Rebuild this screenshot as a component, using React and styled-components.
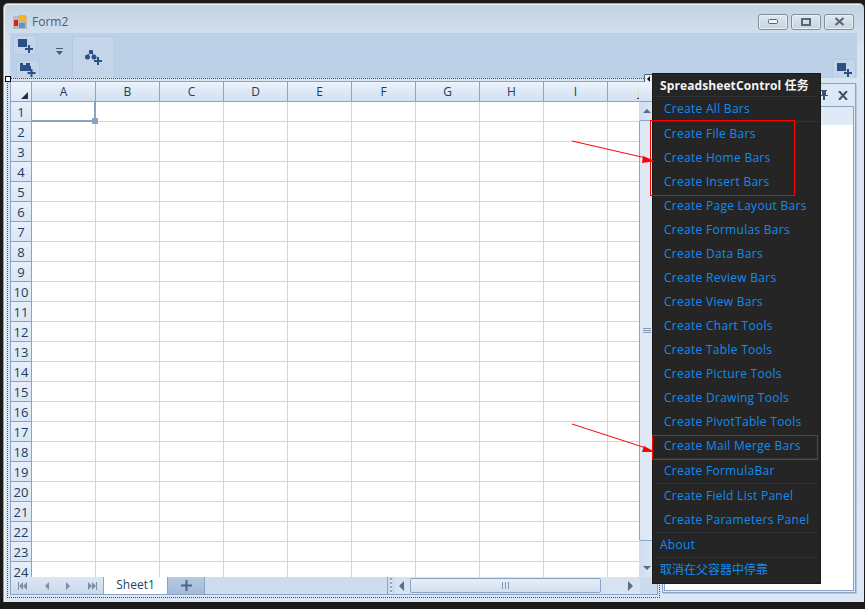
import React from "react";
import styled, { createGlobalStyle } from "styled-components";

const GlobalStyle = createGlobalStyle`
  html, body {
    margin: 0;
    padding: 0;
    background: #1b1b1b;
  }
  * {
    box-sizing: border-box;
  }
`;

const Page = styled.div`
  background: #1b1b1b;
  height: 609px;
  overflow: hidden;
  padding: 3px 1px 7px 3px;
  position: relative;
  width: 865px;
`;

const Window = styled.div`
  background: linear-gradient(180deg, #c3d2e2 0%, #d9e5f2 8%, #dbe7f4 100%);
  border-left: 1px solid #8f99a3;
  border-top: 1px solid #a0a8b0;
  border-radius: 5px 5px 0 0;
  box-shadow: inset 1px 1px 0 #f0f4f8;
  display: flex;
  flex-direction: column;
  height: 100%;
  padding: 0 4px 0 3px;
`;

const TitleBar = styled.div`
  align-items: center;
  display: flex;
  flex: none;
  height: 29px;
  padding: 6px 6px 0 6px;
`;

const TitleText = styled.span`
  color: #4d5d6e;
  font-family: "Open Sans", "Liberation Sans", sans-serif;
  font-size: 12px;
  margin-left: 3px;
`;

const TitleButtons = styled.div`
  display: flex;
  gap: 3px;
  margin-left: auto;
`;

const CaptionButton = styled.div`
  align-items: center;
  background: linear-gradient(180deg, #dfe8f1, #c5d3e2);
  border: 1px solid #7f8d9e;
  border-radius: 3px;
  box-shadow: inset 0 0 0 1px #eaf0f6;
  display: flex;
  height: 16px;
  justify-content: center;
  width: 30px;
`;

const Toolbar = styled.div`
  background: #bcd0e8;
  display: flex;
  flex: none;
  height: 45px;
  margin: 0 3px;
  overflow: hidden;
  padding: 2px 1px 0 3px;
`;

const ToolStack = styled.div`
  display: flex;
  flex-direction: column;
  gap: 5px;
  width: 43px;
`;

const ToolButton = styled.div`
  align-items: center;
  background: #c4d5ea;
  border: 1px solid #b5c9e2;
  border-radius: 3px;
  display: flex;
  flex: none;
  height: ${(p) => p.$h || 20}px;
  justify-content: center;
  margin-left: ${(p) => p.$ml || 0}px;
  width: ${(p) => p.$w || 24}px;
`;

const DropMark = styled.div`
  flex: none;
  margin: 6px 9px 0 0;
  width: 7px;
`;

const BigTool = styled(ToolButton)`
  margin-top: 1px;
`;

const RightTool = styled(ToolButton)`
  align-self: flex-end;
  margin-bottom: -1px;
  margin-left: auto;
`;

const Body = styled.div`
  display: flex;
  flex: 1;
  gap: 1px;
  min-height: 0;
`;

const Selection = styled.div`
  border: 1px dotted #4c4c4c;
  flex: none;
  height: 520px;
  padding: 2px 1px 2px 2px;
  position: relative;
  width: 653px;
`;

const Handle = styled.div`
  background: #fff;
  border: 1px solid #000;
  height: 6px;
  left: -3px;
  position: absolute;
  top: -3px;
  width: 6px;
`;

const SmartTag = styled.div`
  align-items: center;
  background: #e8eef5;
  border: 1px solid #55606c;
  border-radius: 1px;
  display: flex;
  height: 9px;
  justify-content: center;
  position: absolute;
  right: 6px;
  top: -5px;
  width: 9px;
`;

const Sheet = styled.div`
  background: #fff;
  border: 1px solid #8ba3c4;
  display: flex;
  flex-direction: column;
  height: 100%;
`;

const SheetMain = styled.div`
  display: flex;
  flex: 1;
  min-height: 0;
`;

const Grid = styled.div`
  display: grid;
  flex: none;
  grid-auto-rows: 20px;
  grid-template-columns: 21px repeat(10, 64px);
  overflow: hidden;
  width: 628px;
`;

const HeadCell = styled.div`
  align-items: center;
  background: linear-gradient(180deg, #ecf3fb 0%, #dbe7f5 55%, #d3e1f1 100%);
  border-bottom: 1px solid #8ba3c4;
  border-right: 1px solid #8ba3c4;
  color: #243a5c;
  display: flex;
  font-family: "Open Sans", "Liberation Sans", sans-serif;
  font-size: 12px;
  justify-content: center;
  overflow: hidden;
  position: relative;
`;

const RowHead = styled(HeadCell)`
  background: linear-gradient(180deg, #e6eff9, #dae6f4);
  font-size: 13px;
`;

const Corner = styled(HeadCell)`
  background: linear-gradient(180deg, #ecf3fb, #dde8f5);
`;

const CornerMark = styled.div`
  border-bottom: 7px solid #1f2f45;
  border-left: 7px solid transparent;
  bottom: 2px;
  height: 0;
  position: absolute;
  right: 3px;
  width: 0;
`;

const Cell = styled.div`
  background: #fff;
  border-bottom: 1px solid #c9d7ea;
  border-right: 1px solid #c9d7ea;
  position: relative;
`;

const ActiveCell = styled(Cell)`
  border-bottom: 2px solid #8aa3c4;
  border-right: 2px solid #8aa3c4;
  z-index: 1;
`;

const FillHandle = styled.div`
  background: #8aa3c4;
  bottom: -4px;
  height: 6px;
  position: absolute;
  right: -4px;
  width: 6px;
`;

const VScroll = styled.div`
  background: linear-gradient(90deg, #d0deee, #dde7f3);
  display: flex;
  flex: 1;
  flex-direction: column;
  position: relative;
`;

const ScrollCap = styled.div`
  background: linear-gradient(180deg, #ecf3fb, #d3e1f1);
  border-bottom: 1px solid #8ba3c4;
  flex: none;
  height: 20px;
`;

const VArrow = styled.div`
  align-items: flex-end;
  display: flex;
  flex: none;
  height: ${(p) => p.$h}px;
  padding: 0 0 7px 4px;
`;

const VThumb = styled.div`
  align-items: center;
  background: #dfe9f5;
  border: 1px solid #8ba3c4;
  border-radius: 2px;
  display: flex;
  flex: 1;
  padding-left: 3px;
`;

const GripLines = styled.div`
  border-bottom: 1px solid #8496b0;
  border-top: 1px solid #8496b0;
  height: 5px;
  position: relative;
  width: 8px;

  &::after {
    background: #8496b0;
    content: "";
    height: 1px;
    left: 0;
    position: absolute;
    right: 0;
    top: 1px;
  }
`;

const BottomBar = styled.div`
  background: #ccdbed;
  display: flex;
  flex: none;
  height: 17px;
`;

const SheetNav = styled.div`
  align-items: center;
  background: linear-gradient(180deg, #dce7f4, #c9d9ec);
  border-right: 1px solid #8ba3c4;
  display: flex;
  flex: none;
  justify-content: space-between;
  padding: 0 6px 0 7px;
  width: 93px;
`;

const SheetTab = styled.div`
  background: #fff;
  color: #2b3f5c;
  flex: none;
  font-family: "Open Sans", "Liberation Sans", sans-serif;
  font-size: 12px;
  line-height: 16px;
  text-align: center;
  width: 63px;
`;

const AddTab = styled.div`
  align-items: center;
  background: linear-gradient(180deg, #b5c9e2, #a3bbd9);
  border-left: 1px solid #8ba3c4;
  border-right: 1px solid #8ba3c4;
  display: flex;
  flex: none;
  justify-content: center;
  width: 38px;
`;

const TabFill = styled.div`
  background: #cfdcee;
  border-right: 1px solid #8ba3c4;
  flex: none;
  width: 183px;
`;

const Splitter = styled.div`
  background: repeating-linear-gradient(180deg, #8ba3c4 0 2px, #dfe8f3 2px 4px);
  flex: none;
  margin: 1px 3px 0 2px;
  width: 2px;
`;

const HScroll = styled.div`
  align-items: center;
  background: #d8e3f1;
  display: flex;
  flex: 1;
  padding: 0 2px 0 4px;
`;

const HThumb = styled.div`
  align-items: center;
  background: linear-gradient(180deg, #e5edf7, #d4e0f0);
  border: 1px solid #8ba3c4;
  border-radius: 2px;
  display: flex;
  height: 15px;
  justify-content: center;
  margin: 0 27px 0 6px;
  width: 191px;
`;

const HGrip = styled.div`
  border-left: 1px solid #8496b0;
  border-right: 1px solid #8496b0;
  height: 7px;
  position: relative;
  width: 7px;

  &::after {
    background: #8496b0;
    content: "";
    height: 7px;
    left: 2px;
    position: absolute;
    top: 0;
    width: 1px;
  }
`;

const ScrollCorner = styled.div`
  background: #ccdbed;
  flex: none;
  width: 17px;
`;

const DockPanel = styled.div`
  background: #dde8f5;
  border: 1px solid #8ba3c4;
  box-shadow: 1px 1px 0 #b5c7de;
  display: flex;
  flex: none;
  flex-direction: column;
  height: 510px;
  margin: 5px 0 0 1px;
  padding: 0 1px 1px;
  width: 194px;
`;

const DockHead = styled.div`
  align-items: center;
  display: flex;
  flex: none;
  gap: 9px;
  height: 22px;
  justify-content: flex-end;
  padding-right: 6px;
`;

const DockContent = styled.div`
  background: #fff;
  border: 1px solid #8ba3c4;
  display: flex;
  flex: 1;
  flex-direction: column;
`;

const DockStrip = styled.div`
  background: #e0eaf7;
  flex: none;
  height: 18px;
`;

const TaskMenu = styled.div`
  background: #252525;
  border: 1px solid #1a1a1a;
  color: #0d8df2;
  display: flex;
  flex-direction: column;
  font-family: "Open Sans", "Noto Sans CJK SC", sans-serif;
  font-size: 12px;
  height: 511px;
  left: 652px;
  letter-spacing: 0.28px;
  padding: 0 3px;
  position: absolute;
  top: 73px;
  width: 169px;
`;

const MenuTitle = styled.div`
  align-items: center;
  color: #f4f4f4;
  display: flex;
  flex: none;
  font-size: 12px;
  font-weight: 700;
  height: 22px;
  letter-spacing: 0.1px;
  padding-left: 4px;
  white-space: nowrap;
`;

const MenuGroup = styled.div`
  border-top: 1px solid #333;
  display: flex;
  flex: none;
  flex-direction: column;
`;

const MenuItem = styled.div`
  align-items: center;
  display: flex;
  flex: none;
  height: ${(p) => p.$h || 24}px;
  letter-spacing: ${(p) => (p.$plain ? 0 : "inherit")};
  padding-bottom: 2px;
  padding-left: ${(p) => (p.$flush ? 4 : 8)}px;
  white-space: nowrap;
`;

const RedBox = styled.div`
  border: 1px solid #ff0000;
  height: ${(p) => p.$h}px;
  left: ${(p) => p.$x}px;
  pointer-events: none;
  position: absolute;
  top: ${(p) => p.$y}px;
  width: ${(p) => p.$w}px;
`;

const ArrowLayer = styled.svg`
  height: 609px;
  left: 0;
  pointer-events: none;
  position: absolute;
  top: 0;
  width: 865px;
`;

const BLUE = "#2c4f86";

function SquarePlus() {
  return (
    <svg width="20" height="18" viewBox="0 0 20 18">
      <rect x="3" y="3" width="9" height="8" fill={BLUE} />
      <path d="M14 9v8M10 13h8" stroke={BLUE} strokeWidth="2" />
    </svg>
  );
}

function FolderPlus() {
  return (
    <svg width="22" height="18" viewBox="0 0 22 18">
      <path d="M3 2h3v2h3V2h4v3h1v5H3z" fill={BLUE} />
      <path d="M14.5 8v8M10.5 12h8" stroke={BLUE} strokeWidth="2" />
    </svg>
  );
}

function ShapesPlus() {
  return (
    <svg width="20" height="20" viewBox="0 0 20 20">
      <rect x="5" y="1" width="4" height="4" rx="1" fill={BLUE} />
      <circle cx="3.5" cy="8" r="2.5" fill={BLUE} />
      <circle cx="10" cy="8" r="2.5" fill={BLUE} />
      <path d="M4 6l2-2M9 6L8 4" stroke={BLUE} strokeWidth="1" />
      <path d="M14 8v8M10 12h8" stroke={BLUE} strokeWidth="2" />
    </svg>
  );
}

function Tri({ dir = "left", color = "#5a6b85", size = 4 }) {
  const paths = {
    left: "M4 0v8L0 4z",
    right: "M0 0v8l4-4z",
    up: "M0 4h8L4 0z",
    down: "M0 0h8L4 4z",
  };
  const wide = dir === "up" || dir === "down";
  return (
    <svg width={wide ? size * 2 : size} height={wide ? size : size * 2} viewBox={wide ? "0 0 8 4" : "0 0 4 8"}>
      <path d={paths[dir]} fill={color} />
    </svg>
  );
}

function EndArrow({ flip }) {
  return (
    <svg width="9" height="8" viewBox="0 0 9 8" style={flip ? { transform: "scaleX(-1)" } : undefined}>
      <path d="M0 0h1v8H0zM5 0v8L1 4zM9 0v8L5 4z" fill="#7f8ea3" />
    </svg>
  );
}

const columns = ["A", "B", "C", "D", "E", "F", "G", "H", "I", "J"];
const rows = Array.from({ length: 24 }, (_, i) => i + 1);

const firstGroup = [
  "Create File Bars",
  "Create Home Bars",
  "Create Insert Bars",
  "Create Page Layout Bars",
  "Create Formulas Bars",
  "Create Data Bars",
  "Create Review Bars",
  "Create View Bars",
  "Create Chart Tools",
  "Create Table Tools",
  "Create Picture Tools",
  "Create Drawing Tools",
  "Create PivotTable Tools",
  "Create Mail Merge Bars",
];

function App() {
  return (
    <>
      <GlobalStyle />
      <Page>
        <Window>
          <TitleBar>
            <svg width="16" height="14" viewBox="0 0 16 14">
              <rect x="0" y="1" width="14" height="13" fill="#b9b9b9" />
              <rect x="1" y="5" width="4" height="6" fill="#c9261d" />
              <rect x="6" y="0" width="7" height="7" fill="#f0b429" />
              <rect x="6" y="8" width="6" height="5" fill="#5b8fd8" />
            </svg>
            <TitleText>Form2</TitleText>
            <TitleButtons>
              <CaptionButton>
                <svg width="10" height="5" viewBox="0 0 10 5">
                  <rect x="0.5" y="0.5" width="9" height="4" rx="1" fill="#f4f6f8" stroke="#56677c" />
                </svg>
              </CaptionButton>
              <CaptionButton>
                <svg width="10" height="8" viewBox="0 0 10 8">
                  <rect x="1" y="1" width="8" height="6" fill="none" stroke="#56677c" strokeWidth="2" />
                </svg>
              </CaptionButton>
              <CaptionButton>
                <svg width="11" height="9" viewBox="0 0 11 9">
                  <path d="M1.5 1l8 7M9.5 1l-8 7" stroke="#56677c" strokeWidth="2.2" />
                </svg>
              </CaptionButton>
            </TitleButtons>
          </TitleBar>
          <Toolbar>
            <ToolStack>
              <ToolButton>
                <SquarePlus />
              </ToolButton>
              <ToolButton $ml={3}>
                <FolderPlus />
              </ToolButton>
            </ToolStack>
            <DropMark>
              <svg width="7" height="7" viewBox="0 0 7 7">
                <path d="M0 0h7v1H0zM0 3h7L3.5 7z" fill="#4b5a70" />
              </svg>
            </DropMark>
            <BigTool $w={43} $h={45}>
              <ShapesPlus />
            </BigTool>
            <RightTool>
              <SquarePlus />
            </RightTool>
          </Toolbar>
          <Body>
            <Selection>
              <Handle />
              <SmartTag>
                <Tri dir="left" color="#111" size={3} />
              </SmartTag>
              <Sheet>
                <SheetMain>
                  <Grid>
                    <Corner>
                      <CornerMark />
                    </Corner>
                    {columns.map((c) => (
                      <HeadCell key={c}>{c}</HeadCell>
                    ))}
                    {rows.map((r) => (
                      <React.Fragment key={r}>
                        <RowHead>{r}</RowHead>
                        {columns.map((c) =>
                          r === 1 && c === "A" ? (
                            <ActiveCell key={c}>
                              <FillHandle />
                            </ActiveCell>
                          ) : (
                            <Cell key={c} />
                          )
                        )}
                      </React.Fragment>
                    ))}
                  </Grid>
                  <VScroll>
                    <ScrollCap />
                    <VArrow $h={18}>
                      <Tri dir="up" size={4} />
                    </VArrow>
                    <VThumb>
                      <GripLines />
                    </VThumb>
                    <VArrow $h={36}>
                      <Tri dir="down" size={4} />
                    </VArrow>
                  </VScroll>
                </SheetMain>
                <BottomBar>
                  <SheetNav>
                    <EndArrow />
                    <Tri dir="left" color="#7f8ea3" />
                    <Tri dir="right" color="#7f8ea3" />
                    <EndArrow flip />
                  </SheetNav>
                  <SheetTab>Sheet1</SheetTab>
                  <AddTab>
                    <svg width="11" height="11" viewBox="0 0 11 11">
                      <path d="M5.5 0v11M0 5.5h11" stroke="#4d6484" strokeWidth="2" />
                    </svg>
                  </AddTab>
                  <TabFill />
                  <Splitter />
                  <HScroll>
                    <Tri dir="left" size={5} />
                    <HThumb>
                      <HGrip />
                    </HThumb>
                    <Tri dir="right" size={5} />
                  </HScroll>
                  <ScrollCorner />
                </BottomBar>
              </Sheet>
            </Selection>
            <DockPanel>
              <DockHead>
                <svg width="10" height="11" viewBox="0 0 10 11">
                  <path d="M2 0h6v1H7v4h2v1H6v4H4V6H1V5h2V1H2z" fill="#3d5170" />
                </svg>
                <svg width="10" height="9" viewBox="0 0 10 9">
                  <path d="M1 0l8 9M9 0L1 9" stroke="#3d5170" strokeWidth="2" />
                </svg>
              </DockHead>
              <DockContent>
                <DockStrip />
              </DockContent>
            </DockPanel>
          </Body>
        </Window>
        <TaskMenu>
          <MenuTitle>SpreadsheetControl 任务</MenuTitle>
          <MenuGroup>
            <MenuItem>Create All Bars</MenuItem>
          </MenuGroup>
          <MenuGroup>
            {firstGroup.map((t) => (
              <MenuItem key={t}>{t}</MenuItem>
            ))}
          </MenuGroup>
          <MenuGroup>
            <MenuItem>Create FormulaBar</MenuItem>
          </MenuGroup>
          <MenuGroup>
            <MenuItem>Create Field List Panel</MenuItem>
            <MenuItem>Create Parameters Panel</MenuItem>
          </MenuGroup>
          <MenuGroup>
            <MenuItem $flush>About</MenuItem>
          </MenuGroup>
          <MenuGroup>
            <MenuItem $flush $plain $h={24}>取消在父容器中停靠</MenuItem>
          </MenuGroup>
        </TaskMenu>
        <RedBox $x={650} $y={120} $w={145} $h={76} />
        <RedBox $x={652} $y={435} $w={166} $h={25} />
        <ArrowLayer viewBox="0 0 865 609">
          <path d="M572 141L646 158" stroke="#ff0000" strokeWidth="1" fill="none" />
          <path d="M655 161L643 156L642 163z" fill="#ff0000" />
          <path d="M572 424L646 448" stroke="#ff0000" strokeWidth="1" fill="none" />
          <path d="M655 452L644 446L642 452z" fill="#ff0000" />
        </ArrowLayer>
      </Page>
    </>
  );
}

export default App;
